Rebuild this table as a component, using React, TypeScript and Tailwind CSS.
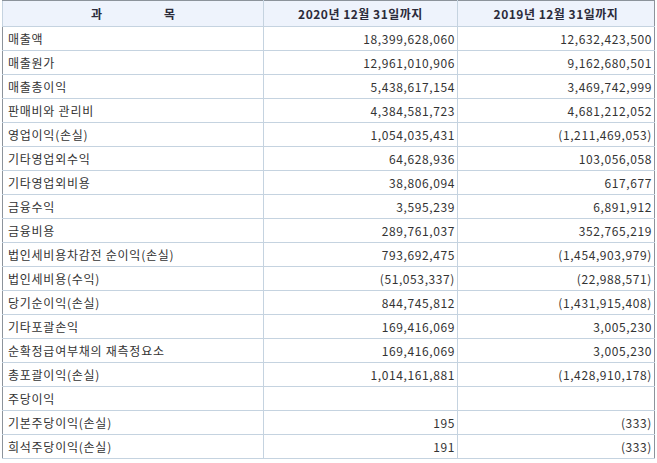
const rows: [string, string, string][] = [
  ["매출액", "18,399,628,060", "12,632,423,500"],
  ["매출원가", "12,961,010,906", "9,162,680,501"],
  ["매출총이익", "5,438,617,154", "3,469,742,999"],
  ["판매비와 관리비", "4,384,581,723", "4,681,212,052"],
  ["영업이익(손실)", "1,054,035,431", "(1,211,469,053)"],
  ["기타영업외수익", "64,628,936", "103,056,058"],
  ["기타영업외비용", "38,806,094", "617,677"],
  ["금융수익", "3,595,239", "6,891,912"],
  ["금융비용", "289,761,037", "352,765,219"],
  ["법인세비용차감전 순이익(손실)", "793,692,475", "(1,454,903,979)"],
  ["법인세비용(수익)", "(51,053,337)", "(22,988,571)"],
  ["당기순이익(손실)", "844,745,812", "(1,431,915,408)"],
  ["기타포괄손익", "169,416,069", "3,005,230"],
  ["순확정급여부채의 재측정요소", "169,416,069", "3,005,230"],
  ["총포괄이익(손실)", "1,014,161,881", "(1,428,910,178)"],
  ["주당이익", "", ""],
  ["기본주당이익(손실)", "195", "(333)"],
  ["희석주당이익(손실)", "191", "(333)"],
];

export default function App() {
  return (
    <div className="w-[657px] h-[463px] bg-white pl-[2px] font-['Noto_Sans_CJK_KR',sans-serif] text-[12px] text-[#333]">
      <table className="w-[652px] border-collapse border border-[#8c939b] table-fixed">
        <colgroup>
          <col className="w-[261px]" />
          <col className="w-[194px]" />
          <col className="w-[197px]" />
        </colgroup>
        <thead>
          <tr className="h-[26px] bg-[#eef3fc]">
            <th className="border border-[#c5d3e0] border-t-[#8c939b] font-bold text-[#2b2b3a] text-center">
              <span className="inline-flex gap-[62px]">
                <span>과</span>
                <span>목</span>
              </span>
            </th>
            <th className="border border-[#c5d3e0] border-t-[#8c939b] font-bold text-[#2b2b3a] text-center tracking-[0.5px]">2020년 12월 31일까지</th>
            <th className="border border-[#c5d3e0] border-t-[#8c939b] border-r-[#8c939b] font-bold text-[#2b2b3a] text-center tracking-[0.5px]">2019년 12월 31일까지</th>
          </tr>
        </thead>
        <tbody>
          {rows.map(([label, a, b]) => (
            <tr key={label} className="h-[24px]">
              <td className="border border-[#c5d3e0] border-l-[#8c939b] pl-[5px] leading-none tracking-[0.75px]">{label}</td>
              <td className="border border-[#c5d3e0] pr-[2px] text-right leading-none tracking-[0.6px]">{a}</td>
              <td className="border border-[#c5d3e0] border-r-[#8c939b] pr-[2px] text-right leading-none tracking-[0.6px]">{b}</td>
            </tr>
          ))}
        </tbody>
      </table>
    </div>
  );
}
